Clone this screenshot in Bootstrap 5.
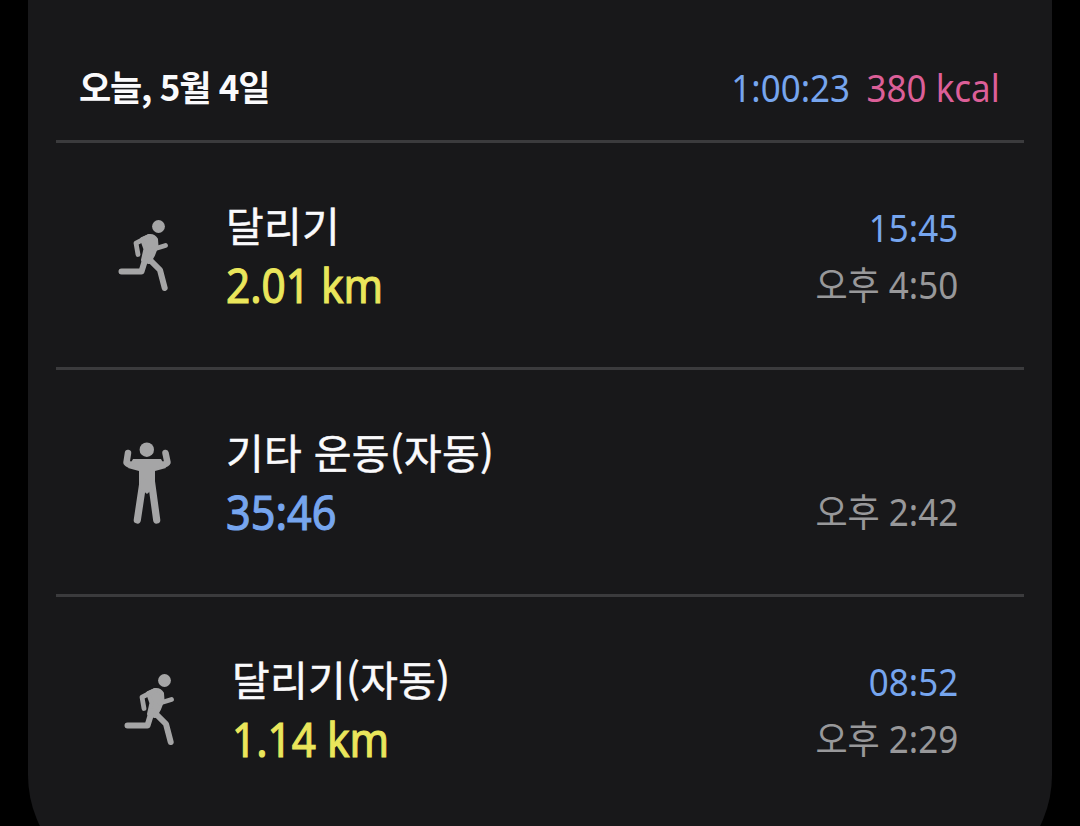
<!DOCTYPE html>
<html lang="ko">
<head>
<meta charset="utf-8">
<meta name="viewport" content="width=device-width, initial-scale=1">
<title>운동 기록</title>
<link href="https://cdn.jsdelivr.net/npm/bootstrap@5.3.0/dist/css/bootstrap.min.css" rel="stylesheet">
<style>
body{background:#000;font-family:"Noto Sans","Noto Sans CJK KR",sans-serif;color:#fafafc}
.screen{height:826px}
.history{height:890px;margin:0 28px;padding:0 28px;background:#18181a;border-radius:0 0 115px 115px}
.day{height:143px;padding:64px 24px 0}
.day,.rule{border-bottom:3px solid #3b3b3d}
.entry{height:227px;padding-right:66px}
.figure-col{width:170px;flex:none;padding:62px 0 0 44px}
.figure-col svg{display:block;fill:#a5a5a6;stroke:#a5a5a6;stroke-linecap:round;stroke-linejoin:round}
.texts{padding-top:51px}
.times{padding-top:56px}
.shifted .figure-col{padding-left:50px}
.shifted .texts{padding-left:6px}
.date{font:700 35px/44px "Noto Sans CJK KR",sans-serif;letter-spacing:-1.2px;margin-left:-1px!important}
.time,.kcal,.clock{font-size:38px;line-height:57px;white-space:pre}
.total,.kcal{line-height:46px}
.times span,.total,.kcal{display:inline-block;transform:scaleX(.92);transform-origin:right}
.total{margin-right:5px}
.time{color:#76a5ee}
.kcal{color:#dc5f98}
.clock{color:#98989a}
.name{font-size:41px;line-height:60px;font-family:"Noto Sans CJK KR",sans-serif;letter-spacing:.3px;-webkit-text-stroke:.5px currentColor}
.amount{font-size:47px;line-height:62px;-webkit-text-stroke:1.1px currentColor}
.amount span{display:inline-block;transform:scaleX(.9);transform-origin:left}
.distance{color:#eae65b}
.duration{color:#76a5ee}
.duration span{transform:scaleX(.92)}
</style>
</head>
<body>
<svg class="d-none" xmlns="http://www.w3.org/2000/svg">
<symbol id="runner" viewBox="0 0 90 100">
<circle cx="58.500" cy="21.500" r="6.400" stroke="none"/>
<path d="M42 34 49 31Q54 30.500 56 34.500L56.500 41 53 50 49 57 43 55 45.500 44Z" stroke-width="4"/>
<path d="M49 31.500 36 38.200 38 49.500M54 44 65.500 40.500" fill="none" stroke-width="4.800"/>
<path d="M46 52 41.500 66.500H21.500M48 53 60 65 64.700 83" fill="none" stroke-width="6"/>
</symbol>
<symbol id="strong" viewBox="0 0 90 105">
<circle cx="46.800" cy="19.700" r="7.200" stroke="none"/>
<path d="M28 23 26.500 32.500Q29 36 38 34M65.500 23 67.500 32.500Q64 36 56 34" fill="none" stroke-width="6.500"/>
<path d="M33 29H61L66 38 55 41V50L55 59H39L39 50V41L28 38Z" stroke="none"/>
<path d="M43 52 37.300 90M51.500 52 56.700 90" fill="none" stroke-width="7.200"/>
<path d="M40 50H54L52.500 59 47 64 41 59Z" stroke="none"/>
</symbol>
</svg>
<div class="screen overflow-hidden">
<main class="history">
<header class="day d-flex justify-content-between align-items-start">
<h1 class="date m-0">오늘, 5월 4일</h1>
<div class="d-flex"><span class="time total">1:00:23</span><span class="kcal">380 kcal</span></div>
</header>
<section class="entry rule d-flex">
<div class="figure-col"><svg width="90" height="100"><use href="#runner"/></svg></div>
<div class="texts flex-grow-1"><div class="name">달리기</div><div class="amount distance"><span>2.01 km</span></div></div>
<div class="times text-end"><div class="time"><span>15:45</span></div><div class="clock"><span>오후 4:50</span></div></div>
</section>
<section class="entry rule d-flex">
<div class="figure-col"><svg width="90" height="105" viewBox="0 2 90 105"><use href="#strong" width="90" height="105"/></svg></div>
<div class="texts flex-grow-1"><div class="name">기타 운동(자동)</div><div class="amount duration"><span>35:46</span></div></div>
<div class="times text-end"><div class="time">&nbsp;</div><div class="clock"><span>오후 2:42</span></div></div>
</section>
<section class="entry shifted d-flex">
<div class="figure-col"><svg width="90" height="100"><use href="#runner"/></svg></div>
<div class="texts flex-grow-1"><div class="name">달리기(자동)</div><div class="amount distance"><span>1.14 km</span></div></div>
<div class="times text-end"><div class="time"><span>08:52</span></div><div class="clock"><span>오후 2:29</span></div></div>
</section>
</main>
</div>
<script src="https://cdn.jsdelivr.net/npm/bootstrap@5.3.0/dist/js/bootstrap.bundle.min.js"></script>
</body>
</html>
